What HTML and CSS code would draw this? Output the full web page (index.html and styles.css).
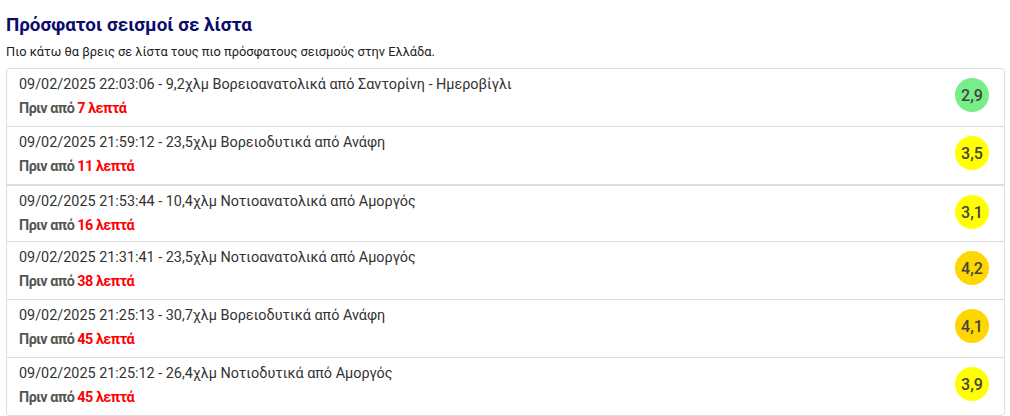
FILE: index.html
```html
<!DOCTYPE html>
<html lang="el">
<head>
<meta charset="utf-8">
<link rel="stylesheet" href="styles.css">
</head>
<body>
<h1 class="title">Πρόσφατοι σεισμοί σε λίστα</h1>
<p class="intro">Πιο κάτω θα βρεις σε λίστα τους πιο πρόσφατους σεισμούς στην Ελλάδα.</p>
<ul class="quakes">
  <li class="quake">
    <div class="info">
      <div class="desc">09/02/2025 22:03:06 - 9,2χλμ Βορειοανατολικά από Σαντορίνη - Ημεροβίγλι</div>
      <div class="ago">Πριν από <span class="mins">7 λεπτά</span></div>
    </div>
    <span class="mag mag-green">2,9</span>
  </li>
  <li class="quake">
    <div class="info">
      <div class="desc">09/02/2025 21:59:12 - 23,5χλμ Βορειοδυτικά από Ανάφη</div>
      <div class="ago">Πριν από <span class="mins">11 λεπτά</span></div>
    </div>
    <span class="mag mag-yellow">3,5</span>
  </li>
  <li class="quake quake-split">
    <div class="info">
      <div class="desc">09/02/2025 21:53:44 - 10,4χλμ Νοτιοανατολικά από Αμοργός</div>
      <div class="ago">Πριν από <span class="mins">16 λεπτά</span></div>
    </div>
    <span class="mag mag-yellow">3,1</span>
  </li>
  <li class="quake">
    <div class="info">
      <div class="desc">09/02/2025 21:31:41 - 23,5χλμ Νοτιοανατολικά από Αμοργός</div>
      <div class="ago">Πριν από <span class="mins">38 λεπτά</span></div>
    </div>
    <span class="mag mag-gold">4,2</span>
  </li>
  <li class="quake">
    <div class="info">
      <div class="desc">09/02/2025 21:25:13 - 30,7χλμ Βορειοδυτικά από Ανάφη</div>
      <div class="ago">Πριν από <span class="mins">45 λεπτά</span></div>
    </div>
    <span class="mag mag-gold">4,1</span>
  </li>
  <li class="quake">
    <div class="info">
      <div class="desc">09/02/2025 21:25:12 - 26,4χλμ Νοτιοδυτικά από Αμοργός</div>
      <div class="ago">Πριν από <span class="mins">45 λεπτά</span></div>
    </div>
    <span class="mag mag-yellow">3,9</span>
  </li>
</ul>
</body>
</html>
```

FILE: styles.css
```css
html, body {
  margin: 0;
  padding: 0;
  background: #fff;
}
body {
  padding: 0 5px 0 6px;
  font-family: Roboto, "Noto Sans", sans-serif;
  color: #333;
}
.title {
  margin: 0;
  padding-top: 13px;
  font-size: 18.8px;
  line-height: 24px;
  font-weight: 700;
  color: #0b0b6e;
}
.intro {
  margin: 7px 0 8px;
  font-size: 12.8px;
  line-height: 16px;
  color: #222;
}
.quakes {
  list-style: none;
  margin: 0;
  padding: 0;
  border: 1px solid #ddd;
  border-radius: 4px;
}
.quake {
  display: flex;
  align-items: center;
  justify-content: space-between;
  padding: 6px 15px 7px 12px;
  border-top: 1px solid #ddd;
}
.quake:first-child {
  border-top: none;
}
.quake-split {
  border-top: 2px solid #ddd;
  padding-bottom: 5px;
}
.info {
  display: flex;
  flex-direction: column;
  gap: 4px;
}
.desc {
  font-size: 14.4px;
  line-height: 20px;
  color: #333;
}
.ago {
  font-size: 14.4px;
  line-height: 20px;
  font-weight: 700;
  letter-spacing: -0.5px;
  color: #555;
}
.mins {
  color: #ff0000;
}
.mag {
  width: 34px;
  height: 34px;
  border-radius: 50%;
  display: flex;
  align-items: center;
  justify-content: center;
  font-size: 16px;
  font-weight: 500;
  color: #444;
  margin-top: -4px;
}
.mag-green { background: #77ee88; }
.mag-yellow { background: #ffff00; }
.mag-gold { background: #ffd700; }
```
